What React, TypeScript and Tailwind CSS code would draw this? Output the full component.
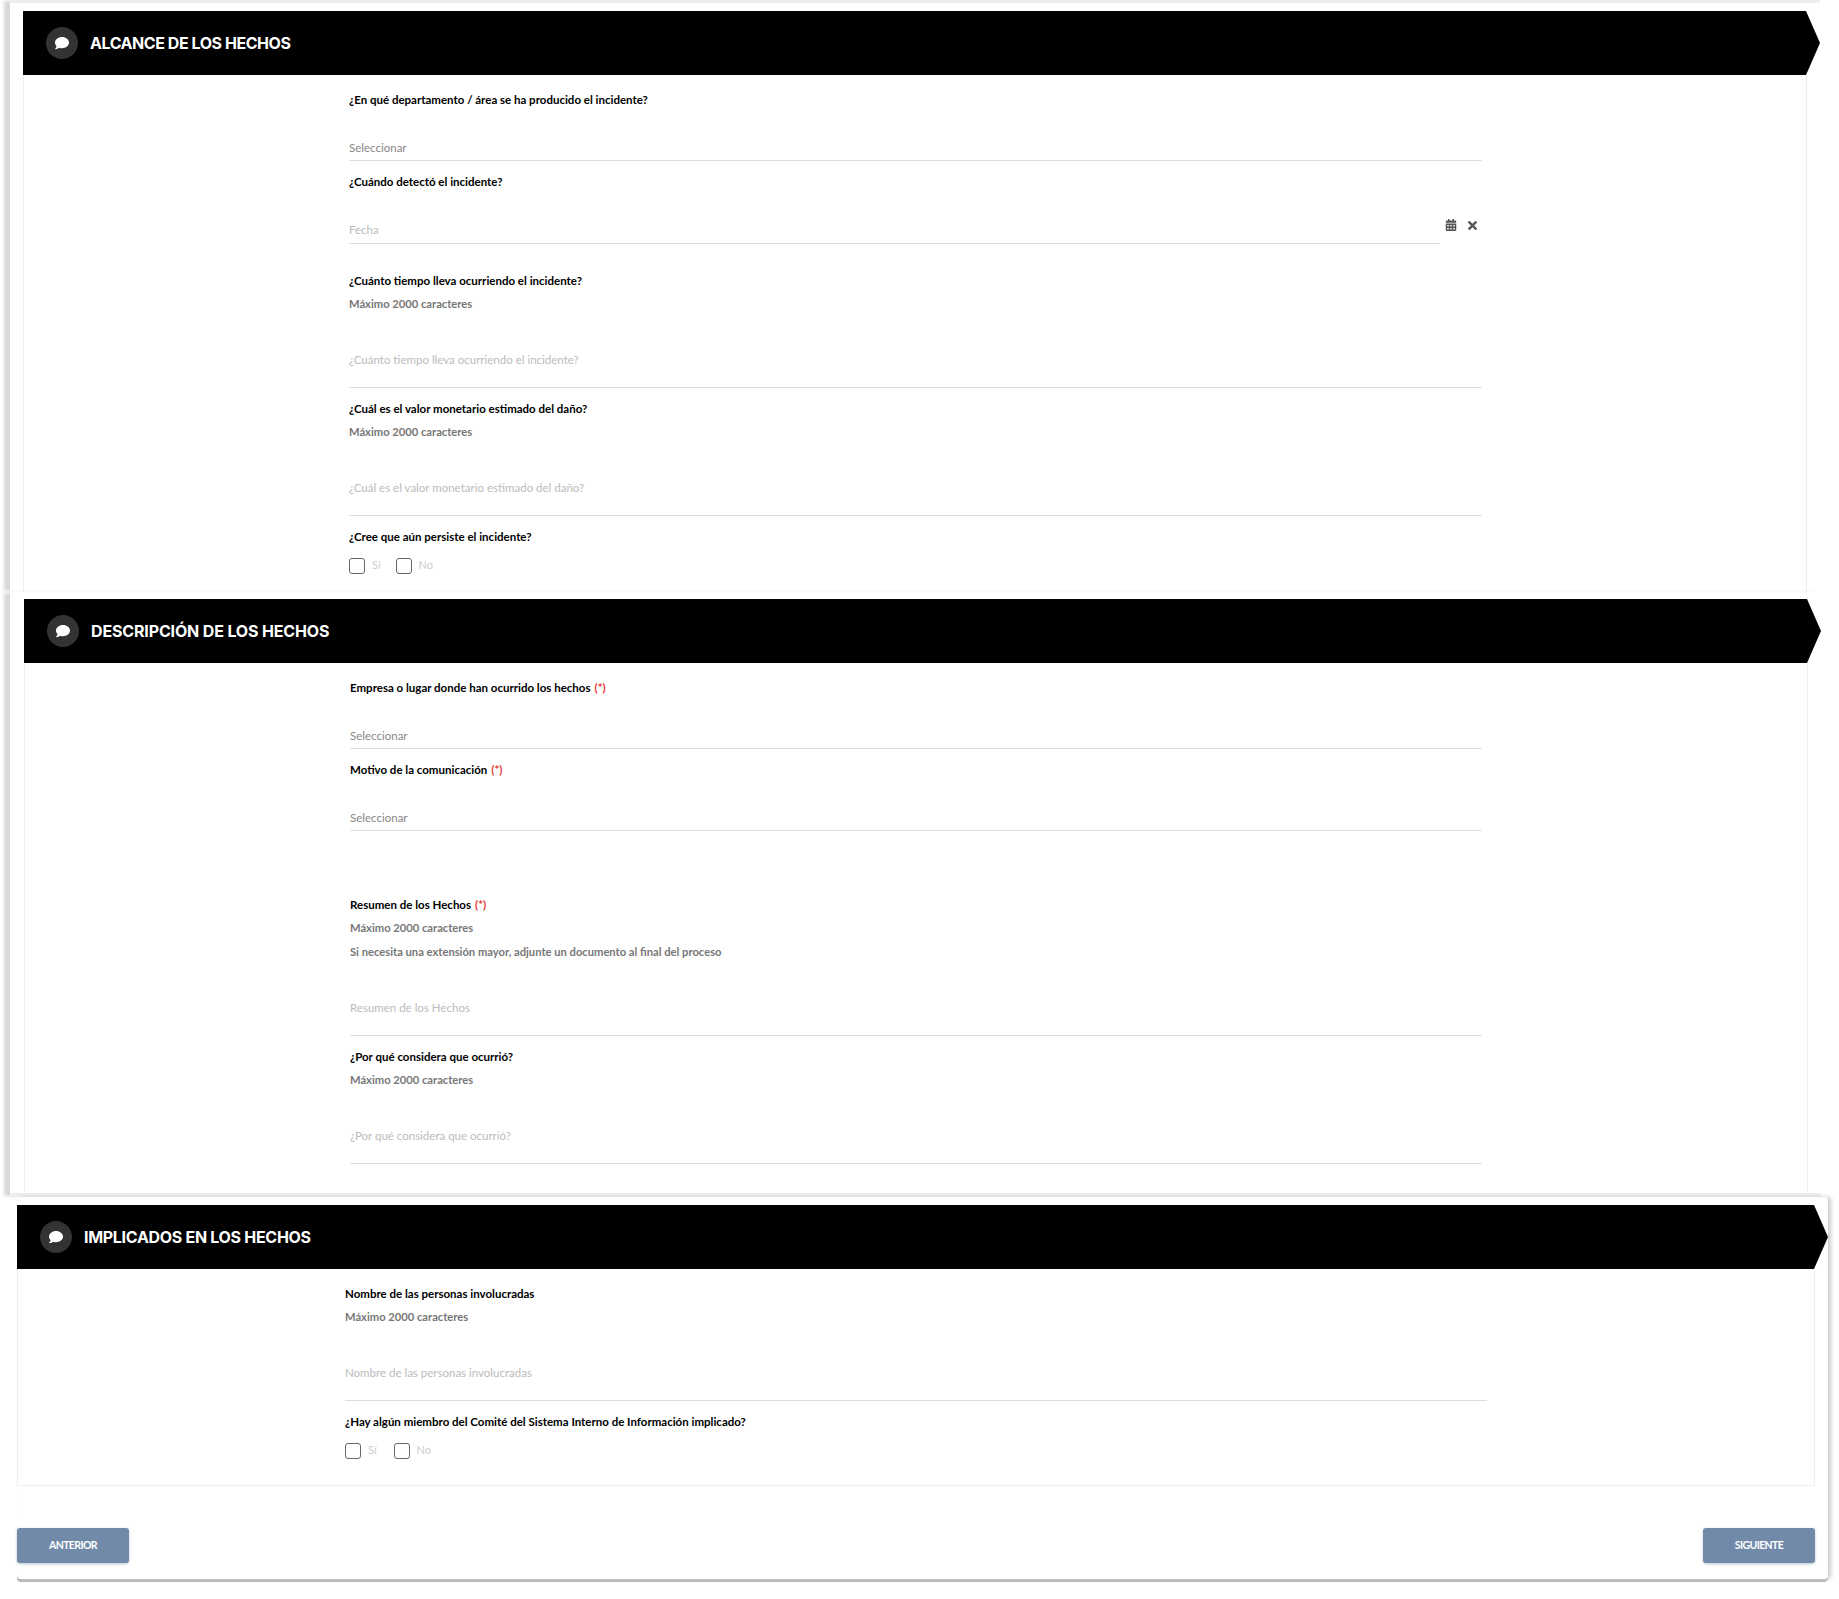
import { FaComment, FaCalendarAlt, FaTimes } from 'react-icons/fa';

function Header({ title, tracking }: { title: string; tracking: string }) {
  return (
    <div className="h-16 bg-black flex items-center pl-[23px] [clip-path:polygon(0_0,calc(100%-14px)_0,100%_50%,calc(100%-14px)_100%,0_100%)]">
      <div className="w-8 h-8 rounded-full bg-[#333] flex items-center justify-center text-white shrink-0">
        <FaComment size={14} />
      </div>
      <h2 className={`ml-3 text-[16px] leading-none font-bold text-white font-['Inter',sans-serif] ${tracking}`}>{title}</h2>
    </div>
  );
}

function Label({ text, required }: { text: string; required?: boolean }) {
  return (
    <div className="h-5 pb-[2px] flex items-center text-[11.5px] font-bold text-black">
      <span>{text}</span>
      {required && <span className="ml-1 text-[#e53935]">(*)</span>}
    </div>
  );
}

function Help({ text, next }: { text: string; next?: boolean }) {
  return (
    <div className={`h-5 flex items-center text-[11.2px] font-bold text-[#777] ${next ? 'mt-1' : 'mt-[2px]'}`}>{text}</div>
  );
}

function Select({ text = 'Seleccionar' }: { text?: string }) {
  return (
    <div className="h-[50px] border-b border-[#ddd] flex items-end pb-1 text-[11.5px] text-[#888]">{text}</div>
  );
}

function TextArea({ text }: { text: string }) {
  return (
    <div className="h-[74px] border-b border-[#ddd] pt-9 text-[11.5px] leading-5 text-[#bbb]">{text}</div>
  );
}

function Checks({ gap }: { gap: string }) {
  return (
    <div className={`flex items-center h-4 ${gap}`}>
      {['Sí', 'No'].map((o) => (
        <div key={o} className="flex items-center gap-[7px]">
          <div className="w-4 h-4 rounded-[3px] border border-[#666] bg-white" />
          <span className="text-[11px] text-[#ccc] -mt-[2px]">{o}</span>
        </div>
      ))}
    </div>
  );
}

export default function App() {
  return (
    <div className="font-['Lato','Liberation_Sans',sans-serif] bg-white w-[1839px] h-[1599px] overflow-hidden">
      {/* Section 1 */}
      <section className="h-[592px] ml-[10px] mr-[19px] pt-2 pl-[13px] bg-white border-t-[3px] border-[#eee] shadow-[-7px_0_3px_-1px_#d8d8d8]">
        <Header title="ALCANCE DE LOS HECHOS" tracking="tracking-[-0.45px]" />
        <div className="mr-[13px] border-x border-[#eee] h-[518px] pl-[325px] pr-[324px] pt-4">
          <Label text="¿En qué departamento / área se ha producido el incidente?" />
          <Select />
          <div className="mt-3">
            <Label text="¿Cuándo detectó el incidente?" />
            <div className="flex">
              <div className="flex-1 h-[51px] border-b border-[#ddd] flex items-end pb-[5px] text-[11.5px] text-[#bbb]">Fecha</div>
              <div className="w-[42px] pl-[5px] pt-[26px] flex gap-[9px] text-[#555]">
                <FaCalendarAlt size={12} />
                <FaTimes size={13} />
              </div>
            </div>
          </div>
          <div className="mt-7">
            <Label text="¿Cuánto tiempo lleva ocurriendo el incidente?" />
            <Help text="Máximo 2000 caracteres" />
            <TextArea text="¿Cuánto tiempo lleva ocurriendo el incidente?" />
          </div>
          <div className="mt-3">
            <Label text="¿Cuál es el valor monetario estimado del daño?" />
            <Help text="Máximo 2000 caracteres" />
            <TextArea text="¿Cuál es el valor monetario estimado del daño?" />
          </div>
          <div className="mt-3">
            <Label text="¿Cree que aún persiste el incidente?" />
            <div className="mt-[10px]">
              <Checks gap="gap-[15px]" />
            </div>
          </div>
        </div>
      </section>

      {/* Section 2 */}
      <section className="h-[605px] ml-[10px] mr-[18px] pt-[7px] pl-[14px] bg-white shadow-[-7px_0_3px_-1px_#d8d8d8] border-b-[4px] border-[#eee]">
        <Header title="DESCRIPCIÓN DE LOS HECHOS" tracking="tracking-[-0.15px]" />
        <div className="mr-[13px] border-x border-[#eee] h-[530px] pl-[325px] pr-[325px] pt-4">
          <Label text="Empresa o lugar donde han ocurrido los hechos" required />
          <Select />
          <div className="mt-3">
            <Label text="Motivo de la comunicación" required />
            <Select />
          </div>
          <div className="mt-[65px]">
            <Label text="Resumen de los Hechos" required />
            <Help text="Máximo 2000 caracteres" />
            <Help text="Si necesita una extensión mayor, adjunte un documento al final del proceso" next />
            <TextArea text="Resumen de los Hechos" />
          </div>
          <div className="mt-3">
            <Label text="¿Por qué considera que ocurrió?" />
            <Help text="Máximo 2000 caracteres" />
            <TextArea text="¿Por qué considera que ocurrió?" />
          </div>
        </div>
      </section>

      {/* Section 3 */}
      <section className="h-[382px] ml-[17px] mr-[11px] pt-2 bg-white rounded-[4px] shadow-[3px_0_4px_#ccc,0_3px_0_#b8b8b8]">
        <Header title="IMPLICADOS EN LOS HECHOS" tracking="tracking-[-0.3px]" />
        <div className="mr-[13px] border-x border-b border-[#eee] h-[217px] pl-[327px] pr-[327px] pt-4">
          <Label text="Nombre de las personas involucradas" />
          <Help text="Máximo 2000 caracteres" />
          <TextArea text="Nombre de las personas involucradas" />
          <div className="mt-3">
            <Label text="¿Hay algún miembro del Comité del Sistema Interno de Información implicado?" />
            <div className="mt-[10px]">
              <Checks gap="gap-[17px]" />
            </div>
          </div>
        </div>
        <div className="mt-[42px] mr-[13px] flex justify-between">
          <button className="w-[112px] h-[35px] rounded-[3px] bg-[#728aa9] text-white text-[10.5px] font-bold tracking-[-0.6px] shadow-[0_1px_3px_#b8c6d6]">ANTERIOR</button>
          <button className="w-[112px] h-[35px] rounded-[3px] bg-[#728aa9] text-white text-[10.5px] font-bold tracking-[-0.6px] shadow-[0_1px_3px_#b8c6d6]">SIGUIENTE</button>
        </div>
      </section>
    </div>
  );
}
